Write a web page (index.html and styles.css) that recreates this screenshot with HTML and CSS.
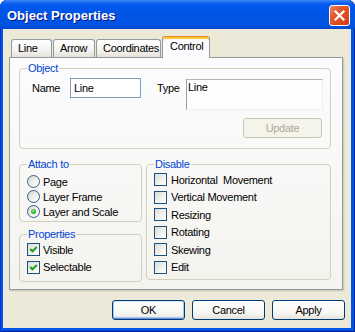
FILE: index.html
```html
<!DOCTYPE html>
<html>
<head>
<meta charset="utf-8">
<title>Object Properties</title>
<link rel="stylesheet" href="styles.css">
</head>
<body>
<div class="window">
  <div class="titlebar">
    <span class="title">Object Properties</span>
    <button class="close" aria-label="Close">
      <svg width="13" height="13" viewBox="0 0 13 13"><path d="M2.5 2.5 L10.5 10.5 M10.5 2.5 L2.5 10.5" stroke="#fff" stroke-width="2.2" stroke-linecap="square" fill="none"/></svg>
    </button>
  </div>
  <div class="client">
    <div class="tabs">
      <div class="tab w-line">Line</div>
      <div class="tab w-arrow">Arrow</div>
      <div class="tab w-coord">Coordinates</div>
      <div class="tab selected w-control">Control</div>
    </div>
    <div class="panel">
      <fieldset class="group obj">
        <legend>Object</legend>
        <div class="obj-row">
          <span class="lbl-name">Name</span>
          <div class="input">Line</div>
          <span class="lbl-type">Type</span>
          <div class="textarea">Line</div>
        </div>
        <div class="obj-actions"><button class="btn update" disabled>Update</button></div>
      </fieldset>
      <div class="cols">
        <div class="col-left">
          <fieldset class="group attach">
            <legend>Attach to</legend>
            <div class="opt"><span class="radio"></span>Page</div>
            <div class="opt"><span class="radio"></span>Layer Frame</div>
            <div class="opt"><span class="radio on"><span class="dot"></span></span>Layer and Scale</div>
          </fieldset>
          <fieldset class="group props">
            <legend>Properties</legend>
            <div class="chk-row"><span class="check"><svg width="11" height="11" viewBox="0 0 11 11"><polyline points="2.2,5 4.5,7.3 8.8,3" fill="none" stroke="#21A121" stroke-width="2.1"/></svg></span>Visible</div>
            <div class="chk-row"><span class="check"><svg width="11" height="11" viewBox="0 0 11 11"><polyline points="2.2,5 4.5,7.3 8.8,3" fill="none" stroke="#21A121" stroke-width="2.1"/></svg></span>Selectable</div>
          </fieldset>
        </div>
        <fieldset class="group disable">
          <legend>Disable</legend>
          <div class="chk-row wide"><span class="check"></span>Horizontal&nbsp; Movement</div>
          <div class="chk-row wide"><span class="check"></span>Vertical Movement</div>
          <div class="chk-row wide"><span class="check"></span>Resizing</div>
          <div class="chk-row wide"><span class="check"></span>Rotating</div>
          <div class="chk-row wide"><span class="check"></span>Skewing</div>
          <div class="chk-row wide"><span class="check"></span>Edit</div>
        </fieldset>
      </div>
    </div>
    <div class="actions">
      <button class="btn default">OK</button>
      <button class="btn">Cancel</button>
      <button class="btn">Apply</button>
    </div>
  </div>
</div>
</body>
</html>
```

FILE: styles.css
```css
* { box-sizing: border-box; }
html, body { margin: 0; padding: 0; background: #fff; }
body {
  font-family: "Liberation Sans", Arial, sans-serif;
  font-size: 11px;
  letter-spacing: -0.3px;
  color: #000;
}
.window {
  width: 355px;
  height: 332px;
  display: flex;
  flex-direction: column;
  background: #0055E5;
  border-radius: 7px 7px 0 0;
  box-shadow: inset 1px 0 0 #0831D9, inset -1px 0 0 #001EA0, inset 0 -1px 0 #001EA0;
  overflow: hidden;
}
.titlebar {
  height: 29px;
  flex: none;
  display: flex;
  align-items: center;
  padding: 2px 5px 0 7px;
  border-radius: 7px 7px 0 0;
  background: linear-gradient(#3F8CF3 0, #2A7DF6 1px, #0F60EA 3px, #0058EE 6px, #0055E5 50%, #0054E3 85%, #0048CC 100%);
}
.title {
  flex: 1;
  color: #fff;
  font-weight: bold;
  font-size: 13px;
  letter-spacing: 0;
  text-shadow: 1px 1px 0 #0A1883;
}
.close {
  width: 21px;
  height: 21px;
  padding: 0;
  border: 1px solid #fff;
  border-radius: 3px;
  background: linear-gradient(135deg, #E9876A 0%, #E2582B 35%, #D9441A 80%, #C83A14 100%);
  display: flex;
  align-items: center;
  justify-content: center;
}
.close svg { display: block; }
.client {
  flex: 1;
  margin: 0 4px 4px 3px;
  background: #ECE9D8;
  padding-top: 7px;
  display: flex;
  flex-direction: column;
}
.tabs {
  display: flex;
  align-items: flex-end;
  gap: 1px;
  margin-left: 8px;
  height: 21px;
}
.tab {
  height: 18px;
  padding: 0 0 0 6px;
  border: 1px solid #919B9C;
  border-bottom: 0;
  border-radius: 3px 3px 0 0;
  background: linear-gradient(#FFFFFF, #F4F3EF 60%, #E4E2DA);
  line-height: 16px;
  white-space: nowrap;
}
.w-line { width: 41px; }
.w-arrow { width: 42px; }
.w-coord { width: 65px; }
.w-control { width: 48px; }
.tab.selected {
  height: 22px;
  margin-bottom: -1px;
  position: relative;
  z-index: 1;
  background: #FCFCFE;
  border-top: 1px solid #E68B2C;
  box-shadow: inset 0 2px 0 #FFC73C;
  padding-top: 2px;
  padding-left: 7px;
  line-height: 14px;
}
.panel {
  margin: 0 8px 0 6px;
  border: 1px solid #919B9C;
  background: linear-gradient(#FCFCFE, #F4F3EE);
  padding: 4px 11px 7px 9px;
  box-shadow: 1px 1px 0 #D0CEBF, 2px 2px 0 #E2DFD0;
}
.group {
  margin: 0;
  border: 1px solid #D0D0BF;
  border-radius: 4px;
  min-width: 0;
  padding: 3px 7px 2px 7px;
}
.group legend {
  padding: 0 1px;
  color: #0046D5;
  line-height: 13px;
}
.obj { width: 312px; padding: 3px 7px 10px 7px; }
.obj-row { display: flex; align-items: flex-start; }
.lbl-name { margin-left: 5px; width: 38px; line-height: 20px; }
.input {
  width: 71px;
  height: 20px;
  border: 1px solid #7F9DB9;
  background: #fff;
  padding-left: 3px;
  line-height: 18px;
}
.lbl-type { margin-left: 16px; width: 29px; line-height: 20px; }
.textarea {
  width: 137px;
  height: 31px;
  margin-top: 1px;
  border-left: 1px solid #9D9D9D;
  border-top: 1px solid #B5B5B5;
  border-right: 1px solid #EFEEE8;
  border-bottom: 1px solid #EFEEE8;
  background: #FDFDFD;
  padding: 1px 0 0 1px;
  line-height: 13px;
}
.obj-actions { display: flex; justify-content: flex-end; margin-top: 8px; padding-right: 1px; }
.cols {
  display: grid;
  grid-template-columns: 123px 185px;
  column-gap: 4px;
  align-items: start;
  margin-top: 9px;
}
.attach { padding: 3px 7px 2px 7px; }
.opt { height: 15px; display: flex; align-items: center; gap: 3px; }
.radio {
  width: 13px;
  height: 13px;
  flex: none;
  border: 1px solid #2C5F93;
  border-radius: 50%;
  background: linear-gradient(135deg, #D6D5CE, #F4F4F0 60%, #FFFFFF);
  display: flex;
  align-items: center;
  justify-content: center;
}
.dot {
  width: 5px;
  height: 5px;
  border-radius: 50%;
  background: radial-gradient(circle at 40% 40%, #8AE686, #22A81F 70%, #1A8A17);
}
.props { margin-top: 6px; padding: 0 7px 5px 7px; }
.disable { padding: 0 7px 3px 7px; }
.chk-row { height: 17.5px; display: flex; align-items: center; gap: 3px; white-space: nowrap; }
.chk-row.wide { gap: 4px; }
.check {
  width: 13px;
  height: 13px;
  flex: none;
  border: 1px solid #1C5180;
  background: linear-gradient(135deg, #DCDCD7, #F2F2EE 60%, #FFFFFF);
}
.check svg { display: block; }
.btn {
  width: 73px;
  height: 20px;
  padding: 0;
  border: 1px solid #003C74;
  border-radius: 3px;
  background: linear-gradient(#FFFFFF, #F5F5F1 70%, #E5E3D8);
  font-family: inherit;
  font-size: 11px;
  letter-spacing: inherit;
  color: #000;
}
.btn.default {
  box-shadow: inset 0 1px 0 #CEE7FF, inset 1px 0 0 #A8C4F2, inset -1px 0 0 #A8C4F2, inset 0 -1px 0 #6A8FE0, inset 0 -2px 0 #A8C4F2;
}
.btn.update {
  width: 79px;
  border-color: #C9C7BA;
  background: #F5F4EA;
  color: #ACA899;
}
.actions {
  display: flex;
  justify-content: flex-end;
  gap: 7px;
  margin: 10px 6px 0 0;
}
```
